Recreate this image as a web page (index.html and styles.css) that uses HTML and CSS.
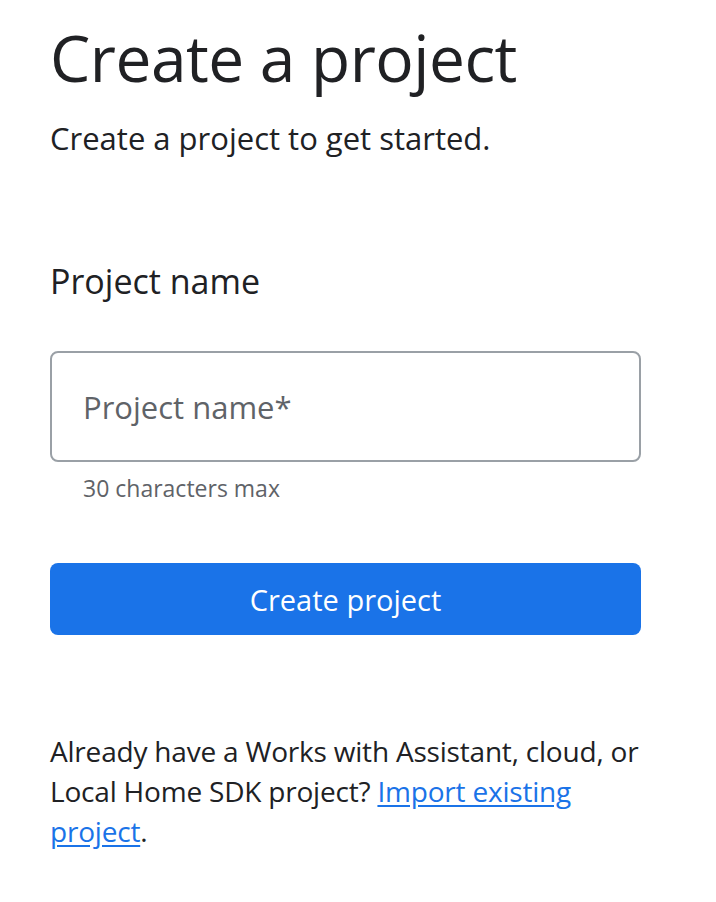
FILE: index.html
```html
<!DOCTYPE html>
<html>
<head>
<meta charset="utf-8">
<link rel="stylesheet" href="styles.css">
</head>
<body>
<main class="page">
  <h1 class="title">Create a project</h1>
  <p class="subtitle">Create a project to get started.</p>
  <h2 class="label">Project name</h2>
  <div class="field">
    <div class="input"><span class="placeholder">Project name*</span></div>
    <div class="hint">30 characters max</div>
  </div>
  <button class="btn">Create project</button>
  <p class="note">Already have a Works with Assistant, cloud, or Local Home SDK project? <a class="link" href="#">Import existing project</a>.</p>
</main>
</body>
</html>
```
FILE: styles.css
```css
html, body { margin: 0; padding: 0; background: #fff; }
body { font-family: "Open Sans", "Liberation Sans", sans-serif; color: #202124; }
.page { width: 591px; padding: 18px 0 0 50px; }
.title { margin: 0; font-weight: 400; font-size: 64px; line-height: 80px; letter-spacing: -0.5px; }
.subtitle { margin: 20px 0 0; font-size: 31px; line-height: 40px; }
.label { margin: 103px 0 0; font-weight: 400; font-size: 34px; line-height: 40px; }
.field { margin-top: 50px; }
.input { box-sizing: border-box; height: 111px; border: 2px solid #9aa0a6; border-radius: 8px; display: flex; align-items: center; padding: 0 31px; }
.placeholder { font-size: 31px; color: #5f6368; }
.hint { padding: 11px 0 0 33px; font-size: 23px; line-height: 30px; color: #5f6368; }
.btn { display: block; box-sizing: border-box; width: 100%; height: 72px; margin-top: 60px; border: 0; border-radius: 8px; background: #1a73e8; color: #fff; font-family: inherit; font-size: 29px; font-weight: 500; }
.note { width: 612px; margin: 96px 0 0; font-size: 28px; line-height: 40px; letter-spacing: -0.2px; }
.link { color: #1a73e8; text-decoration: underline; text-underline-offset: 3px; }
```
